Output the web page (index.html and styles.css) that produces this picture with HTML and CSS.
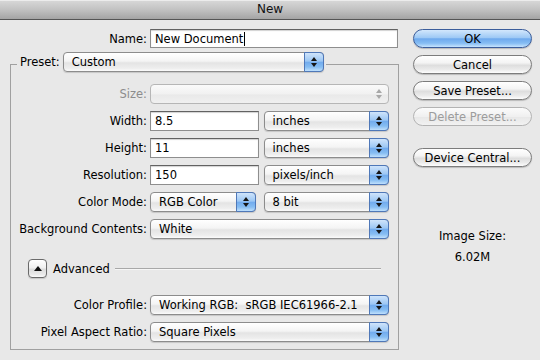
FILE: index.html
```html
<!DOCTYPE html>
<html>
<head>
<meta charset="utf-8">
<title>New</title>
<link rel="stylesheet" href="styles.css">
</head>
<body>
<div class="titlebar">New</div>
<div class="content">
  <div class="main">
    <div class="name-row">
      <span class="label">Name:</span>
      <div class="textfield name-field">New Document<span class="caret"></span></div>
    </div>
    <fieldset class="group">
      <legend><div class="legend-inner"><span class="label">Preset:</span><div class="popup preset">Custom<span class="stepper"></span></div></div></legend>
      <div class="form-grid">
        <span class="label disabled">Size:</span>
        <div class="popup off"><span class="stepper"></span></div>

        <span class="label">Width:</span>
        <div class="pair"><div class="textfield num">8.5</div><div class="popup unit">inches<span class="stepper"></span></div></div>

        <span class="label">Height:</span>
        <div class="pair"><div class="textfield num">11</div><div class="popup unit">inches<span class="stepper"></span></div></div>

        <span class="label">Resolution:</span>
        <div class="pair"><div class="textfield num">150</div><div class="popup unit">pixels/inch<span class="stepper"></span></div></div>

        <span class="label">Color Mode:</span>
        <div class="pair"><div class="popup mode">RGB Color<span class="stepper"></span></div><div class="popup unit">8 bit<span class="stepper"></span></div></div>

        <span class="label">Background Contents:</span>
        <div class="popup">White<span class="stepper"></span></div>
      </div>
      <div class="advanced">
        <span class="disclosure"></span>
        <span class="adv-label">Advanced</span>
        <span class="rule"></span>
      </div>
      <div class="form-grid">
        <span class="label">Color Profile:</span>
        <div class="popup"><span class="pre">Working RGB:  sRGB IEC61966-2.1</span><span class="stepper"></span></div>

        <span class="label">Pixel Aspect Ratio:</span>
        <div class="popup">Square Pixels<span class="stepper"></span></div>
      </div>
    </fieldset>
  </div>
  <div class="side">
    <button class="btn default">OK</button>
    <button class="btn">Cancel</button>
    <button class="btn">Save Preset...</button>
    <button class="btn disabled">Delete Preset...</button>
    <button class="btn device">Device Central...</button>
    <div class="size-label">Image Size:</div>
    <div class="size-value">6.02M</div>
  </div>
</div>
</body>
</html>
```
FILE: styles.css
```css
html, body {
  margin: 0;
  padding: 0;
}
body {
  width: 540px;
  height: 360px;
  overflow: hidden;
  background: #e8e8e8;
  font-family: "DejaVu Sans", "Noto Sans", sans-serif;
  font-size: 11.5px;
  color: #000;
}
.titlebar {
  height: 19px;
  line-height: 19px;
  border-bottom: 1px solid #555;
  background: linear-gradient(#d9d9d9, #c2c2c2 50%, #a4a4a4);
  box-shadow: inset 0 1px 0 #ececec;
  text-align: center;
  font-size: 12px;
  color: #111;
}
.content {
  display: flex;
  padding: 9px 0 0 10px;
}
.main {
  width: 389px;
}
.label {
  text-align: right;
  white-space: nowrap;
}
.label.disabled {
  color: #8c8c8c;
}
.name-row {
  display: flex;
  align-items: center;
  gap: 3px;
}
.name-row .label {
  width: 137px;
}
.textfield {
  box-sizing: border-box;
  height: 20px;
  display: flex;
  align-items: center;
  padding: 0 4px;
  background: #fff;
  border: 1px solid #8e8e8e;
  border-top-color: #626262;
  box-shadow: inset 0 1px 1px rgba(0, 0, 0, 0.18);
}
.name-field {
  width: 248px;
  height: 19px;
}
.caret {
  width: 1px;
  height: 14px;
  background: #000;
  margin-left: 1px;
}
.num {
  width: 109px;
}
.group {
  margin: 4px 0 0;
  padding: 8px 8px 7px 0;
  border: 1px solid #a0a0a0;
  min-width: 0;
}
.group legend {
  margin-left: 6px;
  padding: 0 2px 4px 3px;
}
.legend-inner {
  display: flex;
  align-items: center;
  gap: 3px;
}
.form-grid {
  display: grid;
  grid-template-columns: 136px 239px;
  column-gap: 3px;
  row-gap: 7px;
  align-items: center;
}
.pair {
  display: flex;
  gap: 5px;
}
.popup {
  box-sizing: border-box;
  height: 20px;
  display: flex;
  align-items: center;
  padding-left: 8px;
  border: 1px solid #8c8c8c;
  border-radius: 4px;
  background: linear-gradient(#ffffff, #f4f4f4 45%, #e4e4e4 55%, #eeeeee 85%, #fbfbfb);
  box-shadow: 0 1px 1px rgba(0, 0, 0, 0.15);
  white-space: nowrap;
}
.preset {
  width: 261px;
}
.unit {
  width: 126px;
}
.mode {
  width: 106px;
  margin-right: 3px;
}
.pre {
  white-space: pre;
}
.stepper {
  box-sizing: border-box;
  width: 20px;
  height: 20px;
  margin: -1px -1px -1px auto;
  border: 1px solid #4f78b8;
  border-radius: 0 4px 4px 0;
  background: linear-gradient(#cfe4fb, #9cc7f4 45%, #72acee 52%, #86bdf2 78%, #bfe0fd);
  display: flex;
  flex-direction: column;
  align-items: center;
  justify-content: center;
  gap: 2px;
}
.stepper::before,
.stepper::after {
  content: "";
  width: 0;
  height: 0;
  border-left: 3px solid transparent;
  border-right: 3px solid transparent;
}
.stepper::before {
  border-bottom: 4px solid #151515;
}
.stepper::after {
  border-top: 4px solid #151515;
}
.popup.off {
  border-color: #b6b6b6;
  background: linear-gradient(#fafafa, #f1f1f1 50%, #e9e9e9 55%, #f0f0f0);
  box-shadow: none;
}
.popup.off .stepper {
  border-color: transparent;
  background: transparent;
}
.popup.off .stepper::before {
  border-bottom-color: #a8a8a8;
}
.popup.off .stepper::after {
  border-top-color: #a8a8a8;
}
.advanced {
  display: flex;
  align-items: center;
  margin: 20px 9px 17px 17px;
}
.disclosure {
  box-sizing: border-box;
  width: 19px;
  height: 19px;
  border: 1px solid #6a6a6a;
  border-radius: 4px;
  background: linear-gradient(#ffffff, #f0f0f0 45%, #dcdcdc 55%, #eaeaea 85%, #fafafa);
  box-shadow: 0 1px 1px rgba(0, 0, 0, 0.15);
  display: flex;
  align-items: center;
  justify-content: center;
}
.disclosure::before {
  content: "";
  width: 0;
  height: 0;
  margin-top: -1px;
  border-left: 4px solid transparent;
  border-right: 4px solid transparent;
  border-bottom: 5px solid #111;
}
.adv-label {
  margin-left: 6px;
}
.rule {
  flex: 1;
  height: 1px;
  margin-left: 5px;
  background: #a8a8a8;
  box-shadow: 0 1px 0 #f6f6f6;
}
.side {
  width: 119px;
  margin-left: 14px;
  display: flex;
  flex-direction: column;
  align-items: center;
  gap: 7px;
}
.btn {
  box-sizing: border-box;
  width: 119px;
  height: 19px;
  padding: 0;
  margin: 0;
  font: inherit;
  color: #000;
  border: 1px solid #7c7c7c;
  border-radius: 10px;
  background: linear-gradient(#ffffff, #f4f4f4 40%, #dedede 55%, #ebebeb 80%, #fdfdfd);
  box-shadow: 0 1px 1px rgba(0, 0, 0, 0.2);
  display: flex;
  align-items: center;
  justify-content: center;
}
.btn.default {
  border-color: #3b5d9b;
  background: linear-gradient(#d2e7fc, #9ec9f5 45%, #6ea9ed 52%, #86bdf3 78%, #c6e4fe);
}
.btn.disabled {
  color: #9c9c9c;
  border-color: #b3b3b3;
  box-shadow: none;
  background: linear-gradient(#fbfbfb, #f0f0f0 50%, #e8e8e8 55%, #f2f2f2);
}
.btn.device {
  margin-top: 15px;
}
.size-label {
  margin-top: 55px;
  line-height: 14px;
}
.size-value {
  line-height: 14px;
}
```
